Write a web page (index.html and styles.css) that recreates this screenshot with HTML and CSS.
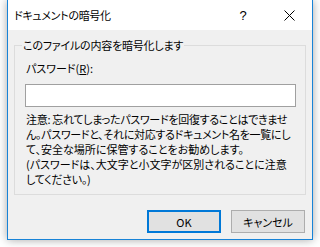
FILE: index.html
```html
<!DOCTYPE html>
<html lang="ja">
<head>
<meta charset="utf-8">
<link rel="stylesheet" href="styles.css">
</head>
<body>
<div class="dialog">
  <div class="titlebar">
    <span class="title">ドキュメントの暗号化</span>
    <span class="cap help">?</span>
    <span class="cap close"><svg width="11" height="11" viewBox="0 0 11 11"><path d="M0.5 0.5L10.5 10.5M10.5 0.5L0.5 10.5" stroke="#000" stroke-width="1"/></svg></span>
  </div>
  <div class="content">
    <fieldset class="group">
      <legend>このファイルの内容を暗号化します</legend>
      <div class="label">パスワード(<u>R</u>):</div>
      <div class="input"></div>
      <div class="note">
        <div class="line tight">注意: 忘れてしまったパスワードを回復することはできませ</div>
        <div class="line tight">ん。パスワードと、それに対応するドキュメント名を一覧にし</div>
        <div class="line">て、安全な場所に保管することをお勧めします。</div>
        <div class="line">(パスワードは、大文字と小文字が区別されることに注意</div>
        <div class="line tight">してください。)</div>
      </div>
    </fieldset>
    <div class="buttons">
      <div class="btn default">OK</div>
      <div class="btn">キャンセル</div>
    </div>
  </div>
</div>
</body>
</html>
```
FILE: styles.css
```css
html, body {
  margin: 0;
  padding: 0;
  background: #ffffff;
}
body {
  width: 320px;
  height: 247px;
  overflow: hidden;
  font-family: "Noto Sans CJK JP", "Noto Sans", sans-serif;
  font-size: 11px;
  font-feature-settings: "palt";
  color: #000;
}
.dialog {
  margin-left: 7px;
  width: 304px;
  height: 239px;
  border: 1px solid #1883d7;
  border-top: 0;
  background: #f0f0f0;
  box-shadow: 0 0 9px rgba(0,0,0,0.35);
}
.titlebar {
  height: 30px;
  background: #ffffff;
  display: flex;
  align-items: center;
}
.title {
  margin-left: 6px;
  line-height: 16px;
  letter-spacing: -0.3px;
  flex: 1;
  white-space: nowrap;
}
.cap {
  width: 46px;
  height: 30px;
  display: flex;
  align-items: center;
  justify-content: center;
}
.help {
  font-family: "Liberation Sans", sans-serif;
  font-size: 13px;
}
.content {
  padding-top: 7px;
}
.group {
  margin: 0 6px;
  padding: 3px 9px 7px 10px;
  border: 1px solid #dcdcdc;
  min-width: 0;
}
.group legend {
  padding: 0 1px;
  margin-left: -3px;
  line-height: 16px;
  letter-spacing: -0.2px;
  white-space: nowrap;
}
.label {
  margin-left: 1px;
  line-height: 16px;
  margin-top: 4px;
  margin-bottom: 8px;
  white-space: nowrap;
}
.input {
  width: 269px;
  height: 21px;
  border: 1px solid #a0a0a0;
  background: #fff;
}
.note {
  margin-top: 5px;
  margin-left: 1px;
}
.line {
  line-height: 15px;
  white-space: nowrap;
}
.line.tight {
  letter-spacing: -0.3px;
}
.buttons {
  display: flex;
  justify-content: flex-end;
  gap: 10px;
  margin-top: 15px;
  margin-right: 7px;
}
.btn {
  box-sizing: border-box;
  width: 74px;
  height: 23px;
  border: 1px solid #adadad;
  background: #e1e1e1;
  display: flex;
  align-items: center;
  justify-content: center;
  white-space: nowrap;
}
.btn.default {
  border: 2px solid #0078d7;
}
```
